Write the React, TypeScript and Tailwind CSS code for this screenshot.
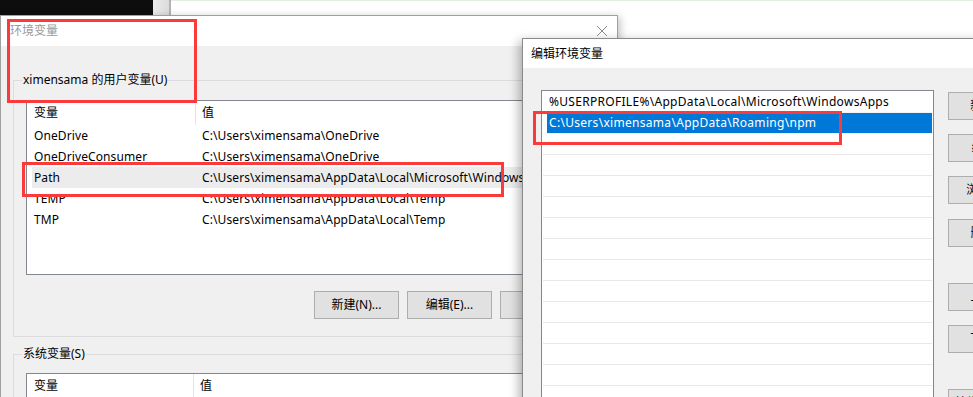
import React from "react";

const userVars = [
  { name: "OneDrive", value: "C:\\Users\\ximensama\\OneDrive" },
  { name: "OneDriveConsumer", value: "C:\\Users\\ximensama\\OneDrive" },
  { name: "Path", value: "C:\\Users\\ximensama\\AppData\\Local\\Microsoft\\WindowsApps;" },
  { name: "TEMP", value: "C:\\Users\\ximensama\\AppData\\Local\\Temp" },
  { name: "TMP", value: "C:\\Users\\ximensama\\AppData\\Local\\Temp" },
];

const pathEntries = [
  "%USERPROFILE%\\AppData\\Local\\Microsoft\\WindowsApps",
  "C:\\Users\\ximensama\\AppData\\Roaming\\npm",
];

function WinButton({ label, className = "" }: { label: string; className?: string }) {
  return (
    <button className={`h-[28px] w-[85px] shrink-0 border border-[#adadad] bg-[#e1e1e1] text-[12px] text-black whitespace-nowrap ${className}`}>
      {label}
    </button>
  );
}

function ListHeader({ nameWidth }: { nameWidth: string }) {
  return (
    <div className="flex h-[24px] items-center pl-[5px]">
      <div className={`${nameWidth} pl-[2px] leading-[24px]`}>变量</div>
      <div className="h-full w-px bg-[#e5e5e5]" />
      <div className="pl-[6px] leading-[24px]">值</div>
    </div>
  );
}

export default function App() {
  return (
    <div
      className="relative h-[397px] w-[973px] overflow-hidden bg-white text-[12px] text-black"
      style={{ fontFamily: '"Noto Sans", "Noto Sans CJK SC", sans-serif' }}
    >
      {/* desktop strip behind the windows */}
      <div className="flex h-[15px]">
        <div className="w-[153px] bg-[#0d0d0d]" />
        <div className="w-[18px] border-r-2 border-[#b4b4b4] bg-gradient-to-r from-[#ececec] to-[#dcdcdc]" />
        <div className="flex-1 border-t border-[#e3efe3] bg-white" />
      </div>

      {/* 环境变量 window */}
      <div className="absolute left-0 top-[15px] flex h-[400px] w-[618px] flex-col border border-[#a0a0a0] bg-[#f0f0f0] shadow-[2px_2px_8px_rgba(0,0,0,0.25)]">
        <div className="flex h-[30px] shrink-0 items-center justify-between bg-white pl-[9px] pr-[8px]">
          <span className="text-[#9a9a9a]">环境变量</span>
          <svg width="12" height="12" viewBox="0 0 12 12" className="mr-[1px]">
            <path d="M1 1L11 11M11 1L1 11" stroke="#8a8a8a" strokeWidth="1" />
          </svg>
        </div>

        <div className="flex flex-col px-[12px]">
          {/* user variables group */}
          <div className="relative mt-[34px] flex h-[257px] flex-col border border-[#dcdcdc] px-[12px] pt-[19px]">
            <span className="absolute -top-[10px] left-[8px] bg-[#f0f0f0] px-px leading-[18px]">ximensama 的用户变量(U)</span>
            <div className="h-[175px] border border-[#828790] bg-white">
              <ListHeader nameWidth="w-[163px]" />
              {userVars.map((v) => (
                <div
                  key={v.name}
                  className={`ml-[5px] flex h-[21px] items-center whitespace-nowrap tracking-[0.1px] ${v.name === "Path" ? "bg-[#ececec]" : ""}`}
                >
                  <div className="w-[170px] shrink-0 pl-[2px]">{v.name}</div>
                  <div className="overflow-hidden">{v.value}</div>
                </div>
              ))}
            </div>
            <div className="mt-[16px] flex justify-end gap-[8px] pr-[7px]">
              <WinButton label="新建(N)..." />
              <WinButton label="编辑(E)..." />
              <WinButton label="删除(D)" />
            </div>
          </div>

          {/* system variables group */}
          <div className="relative mt-[17px] flex h-[200px] flex-col border border-[#dcdcdc] px-[12px] pt-[18px]">
            <span className="absolute -top-[10px] left-[8px] bg-[#f0f0f0] px-px leading-[18px]">系统变量(S)</span>
            <div className="h-[175px] border border-[#828790] bg-white">
              <ListHeader nameWidth="w-[161px]" />
            </div>
          </div>
        </div>
      </div>

      {/* 编辑环境变量 window */}
      <div className="absolute left-[522px] top-[38px] flex h-[420px] w-[520px] flex-col border border-[#8a8a8a] bg-[#f0f0f0] shadow-[-3px_3px_10px_rgba(0,0,0,0.3)]">
        <div className="flex h-[29px] shrink-0 items-center bg-white pl-[8px]">编辑环境变量</div>
        <div className="flex gap-[14px] pl-[18px] pt-[22px]">
          <div className="h-[340px] w-[393px] shrink-0 border border-[#828790] bg-white pr-px pt-px">
            {pathEntries.map((p, i) => (
              <div key={p} className="flex h-[21px] border-b border-[#f3f3f3] pl-px">
                <div
                  className={`flex flex-1 items-center whitespace-nowrap tracking-[0.3px] ${
                    i === 1 ? "ml-[4px] bg-[#0078d7] pl-[2px] text-white" : "pl-[6px]"
                  }`}
                >
                  {p}
                </div>
              </div>
            ))}
            {Array.from({ length: 12 }).map((_, i) => (
              <div key={i} className="ml-px h-[21px] border-b border-[#e8e8e8]" />
            ))}
          </div>
          <div className="flex flex-col pt-[2px]">
            <WinButton label="新建(N)" />
            <WinButton label="编辑(E)" className="mt-[14px]" />
            <WinButton label="浏览(B)..." className="mt-[14px]" />
            <WinButton label="删除(D)" className="mt-[15px]" />
            <WinButton label="上移(U)" className="mt-[36px]" />
            <WinButton label="下移(O)" className="mt-[14px]" />
            <WinButton label="编辑文本(T)..." className="mt-[36px]" />
          </div>
        </div>
      </div>

      {/* red annotation boxes */}
      <div className="absolute left-[7px] top-[19px] h-[84px] w-[190px] border-[3px] border-[#fb3b3b]" />
      <div className="absolute left-[22px] top-[162px] h-[35px] w-[482px] border-[3px] border-[#fb3b3b]" />
      <div className="absolute left-[533px] top-[111px] h-[34px] w-[309px] border-[3px] border-[#fb3b3b]" />
    </div>
  );
}
